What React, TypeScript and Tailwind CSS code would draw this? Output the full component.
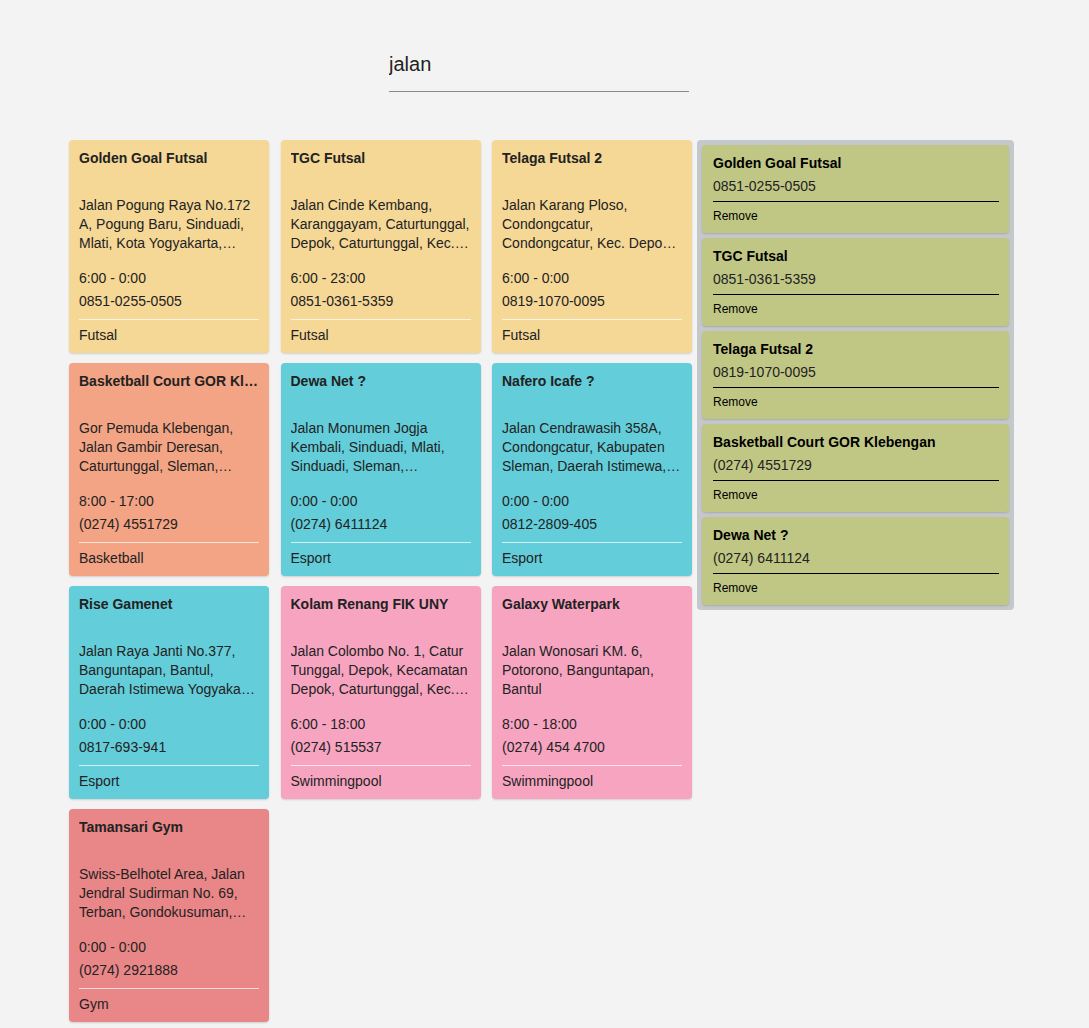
import React from 'react';

interface Place {
    name: string;
    address: string;
    hours: string;
    phone: string;
    type: string;
}

const places: Place[] = [
    { name: 'Golden Goal Futsal', address: 'Jalan Pogung Raya No.172 A, Pogung Baru, Sinduadi, Mlati, Kota Yogyakarta, Daerah Istimewa Yogyakarta', hours: '6:00 - 0:00', phone: '0851-0255-0505', type: 'Futsal' },
    { name: 'TGC Futsal', address: 'Jalan Cinde Kembang, Karanggayam, Caturtunggal, Depok, Caturtunggal, Kec. Depok, Kabupaten Sleman', hours: '6:00 - 23:00', phone: '0851-0361-5359', type: 'Futsal' },
    { name: 'Telaga Futsal 2', address: 'Jalan Karang Ploso, Condongcatur, Condongcatur, Kec. Depok, Kabupaten Sleman', hours: '6:00 - 0:00', phone: '0819-1070-0095', type: 'Futsal' },
    { name: 'Basketball Court GOR Klebengan', address: 'Gor Pemuda Klebengan, Jalan Gambir Deresan, Caturtunggal, Sleman, Daerah Istimewa Yogyakarta', hours: '8:00 - 17:00', phone: '(0274) 4551729', type: 'Basketball' },
    { name: 'Dewa Net ?', address: 'Jalan Monumen Jogja Kembali, Sinduadi, Mlati, Sinduadi, Sleman, Kabupaten Sleman, Yogyakarta', hours: '0:00 - 0:00', phone: '(0274) 6411124', type: 'Esport' },
    { name: 'Nafero Icafe ?', address: 'Jalan Cendrawasih 358A, Condongcatur, Kabupaten Sleman, Daerah Istimewa, Yogyakarta', hours: '0:00 - 0:00', phone: '0812-2809-405', type: 'Esport' },
    { name: 'Rise Gamenet', address: 'Jalan Raya Janti No.377, Banguntapan, Bantul, Daerah Istimewa Yogyakarta 55198', hours: '0:00 - 0:00', phone: '0817-693-941', type: 'Esport' },
    { name: 'Kolam Renang FIK UNY', address: 'Jalan Colombo No. 1, Catur Tunggal, Depok, Kecamatan Depok, Caturtunggal, Kec. Depok, Kabupaten Sleman', hours: '6:00 - 18:00', phone: '(0274) 515537', type: 'Swimmingpool' },
    { name: 'Galaxy Waterpark', address: 'Jalan Wonosari KM. 6, Potorono, Banguntapan, Bantul', hours: '8:00 - 18:00', phone: '(0274) 454 4700', type: 'Swimmingpool' },
    { name: 'Tamansari Gym', address: 'Swiss-Belhotel Area, Jalan Jendral Sudirman No. 69, Terban, Gondokusuman, Kota Yogyakarta', hours: '0:00 - 0:00', phone: '(0274) 2921888', type: 'Gym' },
];

const saved = places.slice(0, 5);

const colorFor = (type: string) => {
    switch (type) {
        case 'Futsal': return 'bg-[#f5d796]';
        case 'Basketball': return 'bg-[#f2a485]';
        case 'Esport': return 'bg-[#63cdd9]';
        case 'Swimmingpool': return 'bg-[#f7a4c1]';
        default: return 'bg-[#e98687]';
    }
};

const PlaceCard = ({ place }: { place: Place }) => (
    <div className={`${colorFor(place.type)} rounded-[4px] shadow-[0_1px_2px_rgba(0,0,0,0.15)] px-[10px] pt-[10px] pb-[8px] text-[#222]`}>
        <div className="h-[46px]">
            <p className="text-[14px] leading-[17px] font-bold truncate">{place.name}</p>
        </div>
        <p className="text-[14px] leading-[19px] h-[57px] line-clamp-3">{place.address}</p>
        <div className="mt-[14px] text-[14px] leading-[23px] pb-[6px] border-b border-white/70">
            <p>{place.hours}</p>
            <p>{place.phone}</p>
        </div>
        <p className="pt-[6px] text-[14px] leading-[19px]">{place.type}</p>
    </div>
);

const SavedCard = ({ place }: { place: Place }) => (
    <div className="bg-[#c0c784] rounded-[4px] shadow-[0_1px_2px_rgba(0,0,0,0.15)] pl-[11px] pr-[10px] pt-[10px] pb-[9px]">
        <p className="text-[14px] leading-[17px] font-bold text-black">{place.name}</p>
        <p className="mt-[4px] text-[14px] leading-[20px] text-[#222] pb-[5px] border-b border-black">{place.phone}</p>
        <p className="pt-[6px] text-[12px] leading-[16px] text-black">Remove</p>
    </div>
);

const App = () => {
    return (
        <div className="min-h-screen bg-[#f3f3f3] pl-[69px] pb-[20px]" style={{ fontFamily: '"Liberation Sans", Arial, sans-serif' }}>
            <div className="pt-[45px] pl-[320px]">
                <input
                    className="w-[300px] h-[47px] bg-transparent border-b border-[#8a8a8a] text-[20px] text-[#222] outline-none pb-[8px]"
                    defaultValue="jalan"
                />
            </div>

            <div className="mt-[48px] flex items-start gap-[5px]">
                <div className="grid grid-cols-[200px_200px_200px] gap-x-[11.5px] gap-y-[10px]">
                    {places.map((p) => <PlaceCard key={p.name} place={p} />)}
                </div>
                <div className="w-[317px] bg-[#c5c8ca] rounded-[4px] p-[5px] flex flex-col gap-[5px]">
                    {saved.map((p) => <SavedCard key={p.name} place={p} />)}
                </div>
            </div>
        </div>
    );
};

export default App;
